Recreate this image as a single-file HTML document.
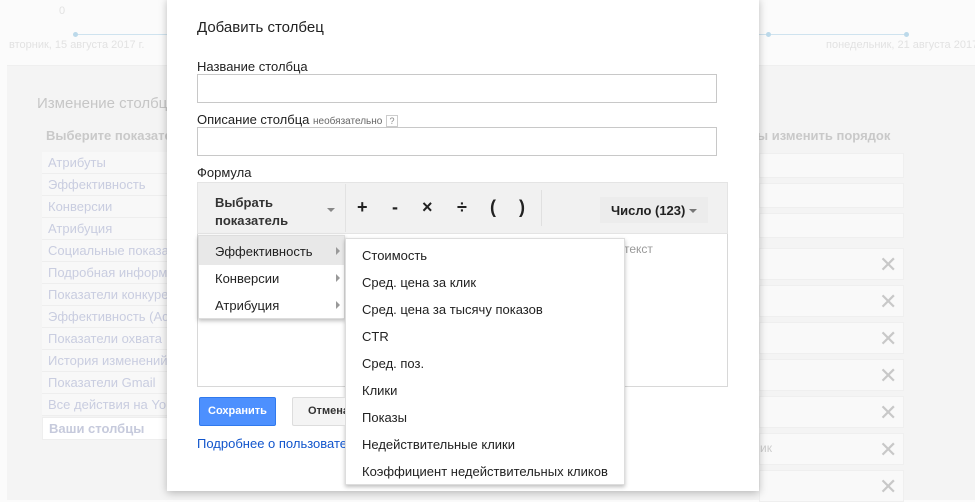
<!DOCTYPE html>
<html><head><meta charset="utf-8"><style>
*{margin:0;padding:0;box-sizing:border-box}
body{width:975px;height:500px;overflow:hidden;position:relative;background:#fbfbfb;font-family:"Liberation Sans",Arial,sans-serif;}
.a{position:absolute;white-space:nowrap}
.bgp{left:7px;top:65px;width:968px;height:435px;background:#f4f4f4;border-top:1px solid #efefef}
.li{left:42px;width:130px;height:22px;border-bottom:1px solid #eeeeee;color:#c9cde0;font-size:13px;padding-left:6px;line-height:22px;background:#f8f8f8}
.rb{left:759px;width:145px;background:#f9f9f9;border:1px solid #efefef}
.x{left:879px;color:#c8c8c8;font-size:22px;line-height:1}
.dlg{left:167px;top:-2px;width:592px;height:493px;background:#fff;box-shadow:0 2px 8px rgba(0,0,0,.25)}
.lbl{font-size:13px;color:#222}
.inp{left:197px;width:520px;height:29px;border:1px solid #c8c8c8;background:#fff}
.op{top:197px;font-size:18px;font-weight:bold;color:#222}
.mi{font-size:13px;color:#222}
</style></head><body>
<div class="a" style="left:59px;top:5px;font-size:11px;color:#e2e2e2">0</div>
<div class="a" style="left:75px;top:34px;width:92px;height:1px;background:#cfe3ef"></div>
<div class="a" style="left:73px;top:32px;width:5px;height:5px;border-radius:50%;background:#bcd9ea"></div>
<div class="a" style="left:9px;top:39px;font-size:11px;color:#e2e2e2">вторник, 15 августа 2017 г.</div>
<div class="a" style="left:759px;top:34px;width:148px;height:1px;background:#cfe3ef"></div>
<div class="a" style="left:766px;top:32px;width:5px;height:5px;border-radius:50%;background:#bcd9ea"></div>
<div class="a" style="left:904px;top:32px;width:5px;height:5px;border-radius:50%;background:#bcd9ea"></div>
<div class="a" style="left:826px;top:39px;font-size:11px;color:#e2e2e2">понедельник, 21 августа 2017 г.</div>
<div class="a bgp"></div>
<div class="a" style="left:37px;top:95px;font-size:15px;color:#c6c6c6">Изменение столбцов</div>
<div class="a" style="left:46px;top:128px;font-size:13px;font-weight:bold;color:#c9c9c9">Выберите показатели</div>
<div class="a li" style="top:152px">Атрибуты</div>
<div class="a li" style="top:174px">Эффективность</div>
<div class="a li" style="top:196px">Конверсии</div>
<div class="a li" style="top:218px">Атрибуция</div>
<div class="a li" style="top:240px">Социальные показатели</div>
<div class="a li" style="top:262px">Подробная информация</div>
<div class="a li" style="top:284px">Показатели конкурентов</div>
<div class="a li" style="top:306px">Эффективность (Ads)</div>
<div class="a li" style="top:328px">Показатели охвата</div>
<div class="a li" style="top:350px">История изменений</div>
<div class="a li" style="top:372px">Показатели Gmail</div>
<div class="a li" style="top:394px">Все действия на YouTube</div>
<div class="a li" style="top:417px;height:23px;background:#fff;border:1px solid #eee;font-weight:bold;color:#c6cadc">Ваши столбцы</div>
<div class="a" style="left:757px;top:128px;font-size:13px;font-weight:bold;color:#c9c9c9">ы изменить порядок</div>
<div class="a rb" style="top:153px;height:25px"></div>
<div class="a rb" style="top:183px;height:25px"></div>
<div class="a rb" style="top:213px;height:25px"></div>
<div class="a rb" style="top:248px;height:32px"></div><div class="a x" style="top:254px">✕</div>
<div class="a rb" style="top:285px;height:32px"></div><div class="a x" style="top:291px">✕</div>
<div class="a rb" style="top:322px;height:32px"></div><div class="a x" style="top:328px">✕</div>
<div class="a rb" style="top:359px;height:32px"></div><div class="a x" style="top:365px">✕</div>
<div class="a rb" style="top:396px;height:32px"></div><div class="a x" style="top:402px">✕</div>
<div class="a rb" style="top:433px;height:32px"></div><div class="a x" style="top:439px">✕</div>
<div class="a" style="left:760px;top:441px;font-size:12px;color:#ccc">ик</div>
<div class="a rb" style="top:470px;height:32px"></div><div class="a x" style="top:476px">✕</div>

<div class="a dlg"></div>
<div class="a" style="left:197px;top:19px;font-size:15px;color:#222">Добавить столбец</div>
<div class="a lbl" style="left:197px;top:59px">Название столбца</div>
<div class="a inp" style="top:74px"></div>
<div class="a lbl" style="left:197px;top:112px">Описание столбца <span style="font-size:10px;color:#666">необязательно</span> <span style="display:inline-block;font-size:9px;color:#888;border:1px solid #ccc;width:12px;height:12px;line-height:11px;text-align:center;vertical-align:middle">?</span></div>
<div class="a inp" style="top:127px"></div>
<div class="a lbl" style="left:197px;top:165px">Формула</div>
<div class="a" style="left:197px;top:182px;width:531px;height:205px;border:1px solid #d8d8d8;background:#fff"></div>
<div class="a" style="left:197px;top:182px;width:531px;height:52px;background:#f1f1f1;border:1px solid #e4e4e4"></div>
<div class="a" style="left:215px;top:194px;font-size:13px;font-weight:bold;color:#333;line-height:18px">Выбрать<br>показатель</div>
<div class="a" style="left:327px;top:208px;border-left:4px solid transparent;border-right:4px solid transparent;border-top:4px solid #888"></div>
<div class="a" style="left:345px;top:184px;width:1px;height:48px;background:#e2e2e2"></div>
<div class="a op" style="left:357px">+</div>
<div class="a op" style="left:392px">-</div>
<div class="a op" style="left:422px">×</div>
<div class="a op" style="left:457px">÷</div>
<div class="a op" style="left:490px">(</div>
<div class="a op" style="left:519px">)</div>
<div class="a" style="left:541px;top:190px;width:1px;height:36px;background:#e0e0e0"></div>
<div class="a" style="left:600px;top:197px;width:108px;height:26px;background:#ececec"></div>
<div class="a" style="left:611px;top:203px;font-size:13px;font-weight:bold;color:#222">Число (123)</div>
<div class="a" style="left:689px;top:209px;border-left:4px solid transparent;border-right:4px solid transparent;border-top:4px solid #777"></div>
<div class="a" style="left:624px;top:242px;font-size:12px;color:#999">текст</div>

<div class="a" style="left:198px;top:235px;width:147px;height:84px;background:#fff;box-shadow:0 2px 4px rgba(0,0,0,.25);border:1px solid #ddd"></div>
<div class="a" style="left:199px;top:236px;width:145px;height:29px;background:#e8e8e8"></div>
<div class="a mi" style="left:215px;top:244px">Эффективность</div>
<div class="a mi" style="left:215px;top:271px">Конверсии</div>
<div class="a mi" style="left:215px;top:298px">Атрибуция</div>
<div class="a" style="left:336px;top:247px;border-top:4px solid transparent;border-bottom:4px solid transparent;border-left:4px solid #999"></div>
<div class="a" style="left:336px;top:274px;border-top:4px solid transparent;border-bottom:4px solid transparent;border-left:4px solid #999"></div>
<div class="a" style="left:336px;top:301px;border-top:4px solid transparent;border-bottom:4px solid transparent;border-left:4px solid #999"></div>

<div class="a" style="left:345px;top:238px;width:280px;height:247px;background:#fff;box-shadow:0 2px 4px rgba(0,0,0,.25);border:1px solid #ddd"></div>
<div class="a mi" style="left:362px;top:248px">Стоимость</div>
<div class="a mi" style="left:362px;top:275px">Сред. цена за клик</div>
<div class="a mi" style="left:362px;top:302px">Сред. цена за тысячу показов</div>
<div class="a mi" style="left:362px;top:329px">CTR</div>
<div class="a mi" style="left:362px;top:356px">Сред. поз.</div>
<div class="a mi" style="left:362px;top:383px">Клики</div>
<div class="a mi" style="left:362px;top:410px">Показы</div>
<div class="a mi" style="left:362px;top:437px">Недействительные клики</div>
<div class="a mi" style="left:362px;top:464px">Коэффициент недействительных кликов</div>

<div class="a" style="left:199px;top:397px;width:77px;height:29px;background:#4d90fe;border:1px solid #3079ed;border-radius:2px;color:#fff;font-size:11px;font-weight:bold;text-align:center;line-height:27px">Сохранить</div>
<div class="a" style="left:292px;top:397px;width:53px;height:29px;background:#f4f4f4;border:1px solid #ddd;border-right:none;border-radius:2px 0 0 2px;color:#333;font-size:11px;font-weight:bold;line-height:27px;padding-left:15px;overflow:hidden">Отмена</div>
<div class="a" style="left:197px;top:436px;width:148px;overflow:hidden;font-size:13px;color:#1155cc">Подробнее о пользовательских столбцах</div>
</body></html>
